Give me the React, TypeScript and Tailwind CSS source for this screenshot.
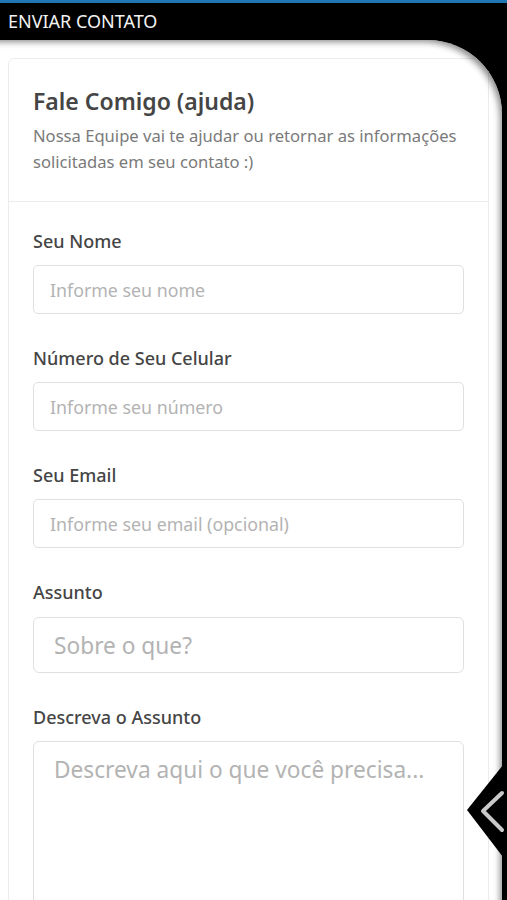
import React from 'react';

const fields = [
  { label: 'Seu Nome', placeholder: 'Informe seu nome' },
  { label: 'Número de Seu Celular', placeholder: 'Informe seu número' },
  { label: 'Seu Email', placeholder: 'Informe seu email (opcional)' },
];

function SideTab() {
  return (
    <svg className="absolute left-[465px] top-[760px]" width="42" height="102" viewBox="0 0 42 102">
      <polygon points="2,50 38,5 42,5 42,97 38,97" fill="#000" />
      <polyline points="37,33 18,51 37,70" fill="none" stroke="#c9c9c9" strokeWidth="4" strokeLinecap="round" strokeLinejoin="round" />
    </svg>
  );
}

export default function App() {
  return (
    <div className="relative h-[900px] overflow-hidden bg-black flex flex-col font-['Noto_Sans',sans-serif]">
      <div className="h-[3px] shrink-0 bg-[#1f78b4]" />
      <div className="h-[37px] shrink-0 px-2 flex items-center text-[18px] text-[#f2f2f2]">ENVIAR CONTATO</div>

      {/* Painel branco */}
      <div className="relative flex-1 mr-[5px] bg-white rounded-tr-[74px] overflow-hidden pt-[18px] pl-2 pr-[13px]">
        <div className="border border-[#ececec] rounded-md">
          <div className="px-6 pt-7 pb-[26px] border-b border-[#ececec]">
            <h1 className="text-[23px] leading-7 font-semibold text-[#454545]">Fale Comigo (ajuda)</h1>
            <p className="mt-2 text-[16.6px] leading-[26px] text-[#7a7a7a]">
              Nossa Equipe vai te ajudar ou retornar as informações solicitadas em seu contato :)
            </p>
          </div>

          <div className="px-6 pt-[27px] flex flex-col">
            {fields.map((f) => (
              <div key={f.label} className="mb-8">
                <label className="block text-[18px] leading-6 font-medium text-[#454545]">{f.label}</label>
                <input
                  className="mt-3 w-full h-[49px] px-4 border border-[#e0e0e0] rounded-[5px] text-[17.8px] placeholder:text-[#b3b3b3] outline-none"
                  placeholder={f.placeholder}
                />
              </div>
            ))}
            <div className="mb-8">
              <label className="block text-[18px] leading-6 font-medium text-[#454545]">Assunto</label>
              <input
                className="mt-[13px] w-full h-[56px] px-5 border border-[#e0e0e0] rounded-[6px] text-[22.7px] placeholder:text-[#b3b3b3] outline-none"
                placeholder="Sobre o que?"
              />
            </div>
            <div>
              <label className="block text-[18px] leading-6 font-medium text-[#454545]">Descreva o Assunto</label>
              <textarea
                className="mt-3 w-full h-[220px] px-5 py-[14px] border border-[#e0e0e0] rounded-[6px] text-[22.7px] leading-7 placeholder:text-[#b3b3b3] outline-none resize-none"
                placeholder="Descreva aqui o que você precisa..."
              />
            </div>
          </div>
        </div>
        {/* sombra da curva */}
        <div className="pointer-events-none absolute inset-0 rounded-tr-[74px] shadow-[inset_-5px_5px_6px_-3px_rgba(0,0,0,0.45)]" />
      </div>

      <SideTab />
    </div>
  );
}
